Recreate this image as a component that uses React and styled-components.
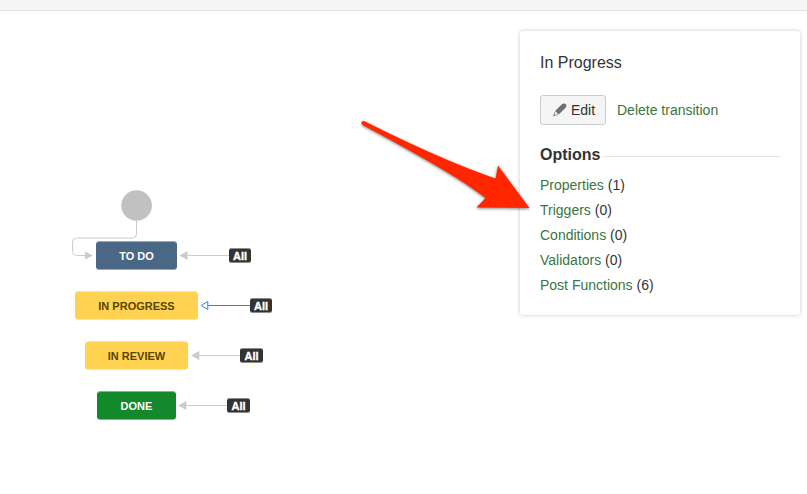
import React from 'react';
import styled, { createGlobalStyle } from 'styled-components';

const GlobalStyle = createGlobalStyle`
  * { box-sizing: border-box; }
  body {
    margin: 0;
    background: #fff;
    color: #333;
    font: 14px/25px "Liberation Sans", Arial, sans-serif;
  }
`;

const Page = styled.div`
  display: flex;
  flex-direction: column;
  height: 100vh;
  overflow: hidden;
`;

const Toolbar = styled.header`
  flex: 0 0 11px;
  background: #f5f5f5;
  border-bottom: 1px solid #e4e4e4;
`;

const Designer = styled.main`
  position: relative;
  flex: 1;
  display: flex;
  align-items: flex-start;
  padding-right: 7px;
`;

const Canvas = styled.section`
  position: relative;
  flex: 1;
  align-self: stretch;
`;

const Links = styled.svg`
  position: absolute;
  left: 0;
  top: 0;
`;

const Status = styled.div`
  position: absolute;
  left: ${(p) => p.$x}px;
  top: ${(p) => p.$y}px;
  width: ${(p) => p.$w}px;
  height: 29px;
  border: solid ${(p) => p.$bg}90;
  border-width: 1px 0;
  border-radius: 3px;
  background: ${(p) => p.$bg};
  background-clip: padding-box;
  color: ${(p) => p.$color};
  font-size: 11px;
  font-weight: bold;
  line-height: 28px;
  text-align: center;
  white-space: nowrap;
`;

const AllLabel = styled.div`
  position: absolute;
  left: ${(p) => p.$x}px;
  top: ${(p) => p.$y}px;
  width: ${(p) => p.$w}px;
  height: 15px;
  border: solid #33333390;
  border-width: 1px 0;
  border-radius: 2px;
  background: #333;
  background-clip: padding-box;
  color: #fff;
  font-size: 11px;
  font-weight: bold;
  line-height: 14px;
  text-align: center;
  -webkit-text-stroke: 0.35px #fff;
`;

const Panel = styled.aside`
  width: 280px;
  height: 284px;
  margin-top: 20px;
  padding: 19px 20px 0;
  background: #fff;
  border-radius: 3px;
  box-shadow: 0 0 4px rgba(0, 0, 0, 0.21);
`;

const Title = styled.h2`
  margin: 0 0 20px;
  font-size: 16px;
  font-weight: normal;
  line-height: 25px;
`;

const Actions = styled.div`
  display: flex;
  align-items: center;
  gap: 11px;
  margin-bottom: 17px;
`;

const EditButton = styled.button`
  display: flex;
  align-items: center;
  gap: 4px;
  width: 66px;
  height: 30px;
  padding: 0 0 0 12px;
  background: #f5f5f5;
  border: 1px solid #ccc;
  border-radius: 3px;
  color: #333;
  font: inherit;
`;

const Link = styled.a`
  color: #3b7541;
  text-decoration: none;
`;

const OptionsHeading = styled.h3`
  display: flex;
  align-items: center;
  gap: 3px;
  margin: 0 0 5px;
  font-size: 16px;
  line-height: 26px;
  &::after {
    content: '';
    flex: 1;
    height: 1px;
    margin-top: 2px;
    background: #e2e2e2;
  }
`;

const OptionList = styled.ul`
  margin: 0;
  padding: 0;
  list-style: none;
`;

const Pointer = styled.svg`
  position: absolute;
  left: 350px;
  top: 99px;
  filter: drop-shadow(0 1.5px 1.5px rgba(0, 0, 0, 0.5));
`;

const statuses = [
  { name: 'TO DO', x: 96, y: 230, w: 81, bg: '#4a6785', color: '#fff', tip: 179.3, all: 229, allW: 22 },
  { name: 'IN PROGRESS', x: 75, y: 280, w: 123, bg: '#ffd351', color: '#594300', tip: 200.3, all: 250, allW: 22 },
  { name: 'IN REVIEW', x: 85, y: 330, w: 103, bg: '#ffd351', color: '#594300', tip: 191, all: 240, allW: 23 },
  { name: 'DONE', x: 97, y: 380, w: 79, bg: '#14892c', color: '#fff', tip: 178, all: 227, allW: 23 },
];

const options = [
  ['Properties', 1],
  ['Triggers', 0],
  ['Conditions', 0],
  ['Validators', 0],
  ['Post Functions', 6],
];

function Transitions() {
  return (
    <Links width="300" height="430" fill="none">
      <path d="M136.5 210v13q0 4-4 4H76.500q-4 0-4 4v9.500q0 4 4 4H86" stroke="#ccc" />
      <path d="M85 240.500l8 4-8 4z" fill="#ccc" />
      <circle cx="136.600" cy="194.500" r="15.300" fill="#c1c1c1" />
      {statuses.map((s) => {
        const y = s.y + 14.5;
        const selected = s.name === 'IN PROGRESS';
        return (
          <g key={s.name} stroke={selected ? '#2684ee' : '#ccc'}>
            <path d={`M${s.tip + 8} ${y}H${s.all}`} />
            {selected ? (
              <path d={`M${s.tip + 1} ${y}l6.500-4v8z`} fill="#fff" />
            ) : (
              <path d={`M${s.tip} ${y}l8.300-4.500v9z`} fill="#ccc" stroke="none" />
            )}
          </g>
        );
      })}
    </Links>
  );
}

function Pencil() {
  return (
    <svg width="14" height="14" viewBox="0 0 14 14">
      <path d="M2.100 8L8.600 1.600Q10.900-.1 12.700 1.100Q14.300 2.900 12.400 5L5.700 11.400z" fill="#707070" />
      <path d="M2 8.700L.6 12.800L4.900 11.500" fill="#eee" stroke="#777" strokeWidth=".7" />
      <path d="M.5 13L1 11.300L2.200 12.500z" fill="#707070" />
    </svg>
  );
}

export default function App() {
  return (
    <Page>
      <GlobalStyle />
      <Toolbar />
      <Designer>
        <Canvas>
          <Transitions />
          {statuses.map((s) => (
            <React.Fragment key={s.name}>
              <Status $x={s.x} $y={s.y} $w={s.w} $bg={s.bg} $color={s.color}>{s.name}</Status>
              <AllLabel $x={s.all} $y={s.y + 7} $w={s.allW}>All</AllLabel>
            </React.Fragment>
          ))}
        </Canvas>
        <Panel>
          <Title>In Progress</Title>
          <Actions>
            <EditButton><Pencil />Edit</EditButton>
            <Link>Delete transition</Link>
          </Actions>
          <OptionsHeading>Options</OptionsHeading>
          <OptionList>
            {options.map(([name, count]) => (
              <li key={name}><Link>{name}</Link> ({count})</li>
            ))}
          </OptionList>
        </Panel>
        <Pointer width="190" height="110">
          <path d="M14.500 11.200Q60 34 100 51Q124 61 145.500 68.500L148 55.500L179.500 98L126.500 97.500L135.500 88Q117 74 95 61Q60 40 13 15.200Q10.500 13 12 11.500Q13 10.600 14.500 11.200Z" fill="#ff2600" />
        </Pointer>
      </Designer>
    </Page>
  );
}
